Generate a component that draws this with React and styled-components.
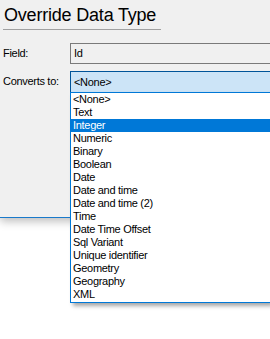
import React from "react";
import styled, { createGlobalStyle } from "styled-components";

const GlobalStyle = createGlobalStyle`
  html, body, #root {
    margin: 0;
    padding: 0;
    min-height: 339px;
  }
  body {
    overflow: hidden;
    background: #ffffff;
    font-family: "Liberation Sans", Arial, sans-serif;
    font-size: 11px;
    letter-spacing: -0.3px;
    color: #000000;
  }
`;

const Dialog = styled.div`
  background: #f0f0f0;
  height: 217px;
  border-bottom: 1px solid #1979ca;
  box-shadow: 0 3px 9px rgba(0, 0, 0, 0.28);
  position: relative;
  z-index: 1;
`;

const Header = styled.div`
  padding: 3px 0 0 3px;
`;

const Title = styled.h1`
  margin: 0;
  padding: 0 0 2px 1px;
  width: 157px;
  font-size: 18px;
  font-weight: 400;
  letter-spacing: -0.2px;
  line-height: 24px;
  white-space: nowrap;
  color: #000000;
  border-bottom: 1px solid #a0a0a0;
`;

const Form = styled.div`
  display: grid;
  grid-template-columns: 70px 1fr;
  row-gap: 7px;
  margin-top: 13px;
`;

const Label = styled.label`
  padding-left: 3px;
  line-height: 21px;
  white-space: nowrap;
`;

const TextBox = styled.div`
  height: 19px;
  line-height: 19px;
  border: 1px solid #7a7a7a;
  border-right: none;
  background: #f0f0f0;
  padding-left: 3px;
`;

const ComboWrap = styled.div`
  position: relative;
`;

const Combo = styled.div`
  height: 20px;
  line-height: 20px;
  border: 1px solid #005499;
  border-right: none;
  background: #cce4f7;
  padding-left: 3px;
`;

const List = styled.ul`
  position: absolute;
  left: 0;
  right: 0;
  top: 21px;
  margin: 0;
  padding: 0 0 1px 0;
  list-style: none;
  background: #ffffff;
  border: 1px solid #0078d7;
  border-right: none;
  box-shadow: 3px 3px 4px rgba(0, 0, 0, 0.35);
  z-index: 2;
`;

const Item = styled.li`
  height: 13px;
  line-height: 13px;
  padding-left: 2px;
  white-space: nowrap;
  background: ${(p) => (p.$selected ? "#0078d7" : "transparent")};
  color: ${(p) => (p.$selected ? "#ffffff" : "#000000")};
`;

const types = [
  "<None>",
  "Text",
  "Integer",
  "Numeric",
  "Binary",
  "Boolean",
  "Date",
  "Date and time",
  "Date and time (2)",
  "Time",
  "Date Time Offset",
  "Sql Variant",
  "Unique identifier",
  "Geometry",
  "Geography",
  "XML",
];

export default function App() {
  return (
    <>
      <GlobalStyle />
      <Dialog>
        <Header>
          <Title>Override Data Type</Title>
        </Header>
        <Form>
          <Label>Field:</Label>
          <TextBox>Id</TextBox>
          <Label>Converts to:</Label>
          <ComboWrap>
            <Combo>&lt;None&gt;</Combo>
            <List>
              {types.map((t) => (
                <Item key={t} $selected={t === "Integer"}>
                  {t}
                </Item>
              ))}
            </List>
          </ComboWrap>
        </Form>
      </Dialog>
    </>
  );
}
